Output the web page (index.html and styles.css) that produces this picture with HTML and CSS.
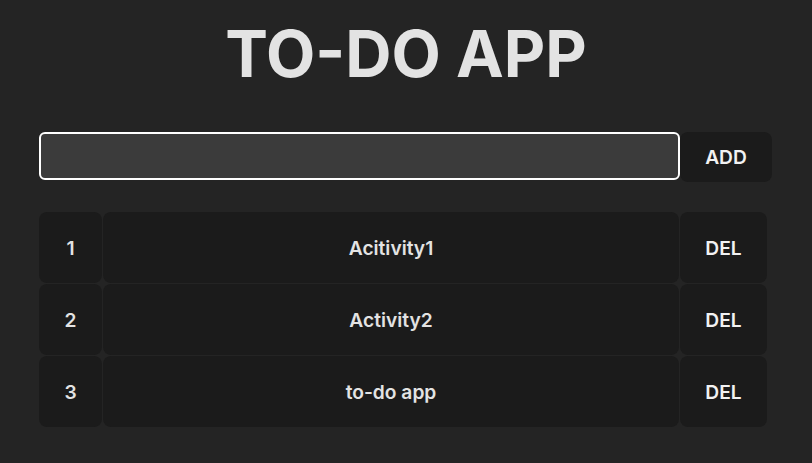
FILE: index.html
```html
<!DOCTYPE html>
<html lang="en">
<head>
<meta charset="utf-8">
<title>To-Do App</title>
<link rel="stylesheet" href="styles.css">
</head>
<body>
<main class="app">
  <h1 class="title">TO-DO APP</h1>
  <form class="add-form">
    <input class="add-input" type="text" aria-label="New activity">
    <button class="btn add-btn" type="button">ADD</button>
  </form>
  <div class="list">
    <div class="cell num">1</div>
    <div class="cell text">Acitivity1</div>
    <div class="cell del">DEL</div>
    <div class="cell num">2</div>
    <div class="cell text">Activity2</div>
    <div class="cell del">DEL</div>
    <div class="cell num">3</div>
    <div class="cell text">to-do app</div>
    <div class="cell del">DEL</div>
  </div>
</main>
</body>
</html>
```
FILE: styles.css
```css
html, body {
  margin: 0;
  padding: 0;
}
body {
  background: #242424;
  color: rgba(255, 255, 255, 0.87);
  font-family: Inter, "Noto Sans", sans-serif;
  min-height: 100vh;
}
.app {
  width: 734px;
  margin: 0 auto;
  padding-top: 14px;
}
.title {
  margin: 0;
  font-size: 64px;
  line-height: 80px;
  font-weight: 700;
  text-align: center;
  color: #e3e3e3;
}
.add-form {
  display: flex;
  align-items: flex-start;
  margin-top: 38px;
}
.add-input {
  box-sizing: border-box;
  width: 641px;
  height: 48px;
  margin: 0;
  background: #3b3b3b;
  border: 2px solid #ffffff;
  border-radius: 6px;
  outline: none;
  color: #fff;
  font-family: inherit;
  font-size: 16px;
  padding: 0 10px;
}
.btn {
  font-family: inherit;
}
.add-btn {
  box-sizing: border-box;
  width: 92px;
  height: 50px;
  border: none;
  border-radius: 8px;
  background: #1b1b1b;
  color: #f2f2f2;
  font-size: 19.2px;
  font-weight: 600;
  cursor: pointer;
}
.list {
  display: grid;
  grid-template-columns: 63px 576px 87px;
  grid-auto-rows: 71px;
  gap: 1px;
  width: 728px;
  margin-top: 30px;
}
.cell {
  background: #1b1b1b;
  border-radius: 8px;
  display: flex;
  align-items: center;
  justify-content: center;
  font-size: 19.2px;
  font-weight: 600;
  color: #e3e3e3;
}
.cell.del {
  color: #f2f2f2;
}
```
